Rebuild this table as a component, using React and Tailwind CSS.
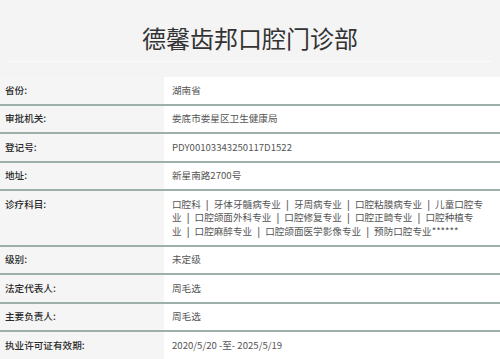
import React from "react";

const lines = [
  ["口腔科", "牙体牙髓病专业", "牙周病专业", "口腔粘膜病专业", "儿童口腔专"],
  ["业", "口腔颌面外科专业", "口腔修复专业", "口腔正畸专业", "口腔种植专"],
  ["业", "口腔麻醉专业", "口腔颌面医学影像专业", "预防口腔专业******"],
];

const Sep = () => (
  <span className="inline-block w-[13px] text-center font-bold text-[#666]">|</span>
);

const Subjects = () => (
  <>
    {lines.map((parts, li) => (
      <div key={li} className="whitespace-nowrap">
        {parts.map((s, i) => (
          <React.Fragment key={i}>
            {i > 0 && <Sep />}
            {s}
          </React.Fragment>
        ))}
      </div>
    ))}
  </>
);

const rows = [
  ["省份:", "湖南省"],
  ["审批机关:", "娄底市娄星区卫生健康局"],
  ["登记号:", "PDY00103343250117D1522"],
  ["地址:", "新星南路2700号"],
  ["诊疗科目:", <Subjects />],
  ["级别:", "未定级"],
  ["法定代表人:", "周毛选"],
  ["主要负责人:", "周毛选"],
  ["执业许可证有效期:", "2020/5/20 -至- 2025/5/19"],
];

export default function App() {
  return (
    <div className="w-[500px] h-[359px] overflow-hidden bg-[#f4f4f4] font-['Noto_Sans_CJK_SC','Noto_Sans',sans-serif]">
      <div className="mx-2 h-[62px] border-b border-[#fbfbfb] pt-[23px] text-center text-[24px] leading-[30px] text-[#333]">
        德馨齿邦口腔门诊部
      </div>
      <div className="mt-[15px]">
        {rows.map(([k, v]) => (
          <div key={k} className="flex border-b-2 border-[#9cb0a8]">
            <div className="w-[164px] shrink-0 bg-[#f5f5f5] pl-[5px] py-[6.5px] text-[9.6px] leading-[13px] font-medium text-[#2a2a2a]">
              {k}
            </div>
            <div className="flex-1 bg-white pl-[8px] pr-[12px] py-[6.5px] text-[9.6px] leading-[13.5px] text-[#555]">
              {v}
            </div>
          </div>
        ))}
      </div>
    </div>
  );
}
